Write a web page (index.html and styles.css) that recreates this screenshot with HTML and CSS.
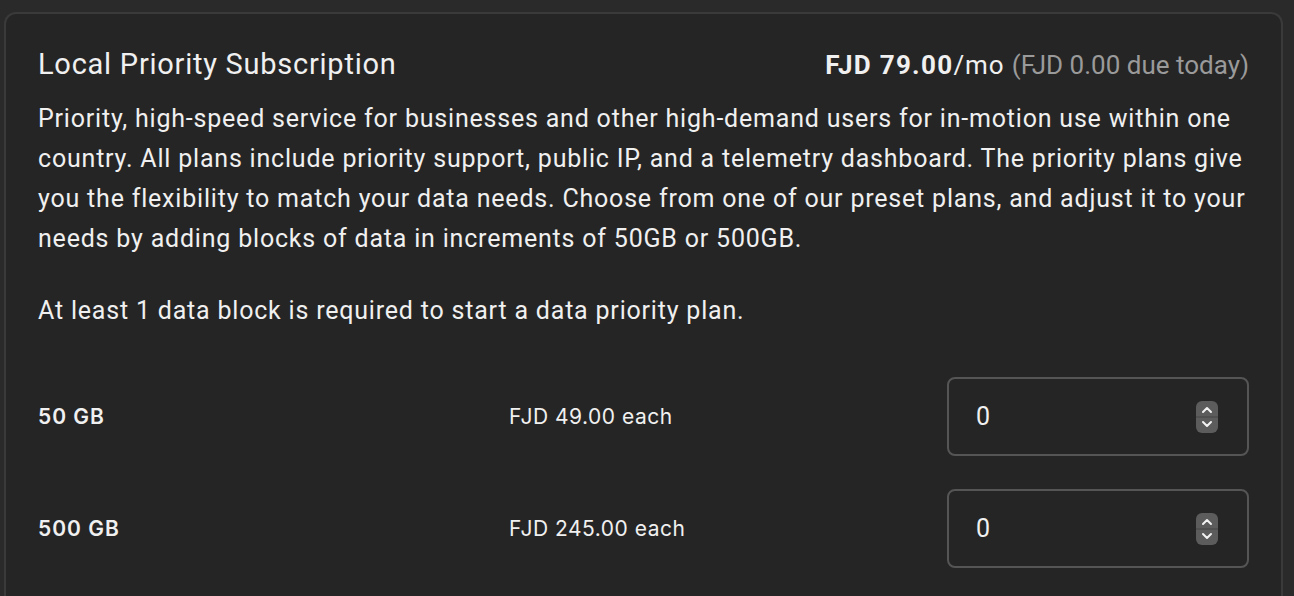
FILE: index.html
```html
<!DOCTYPE html>
<html lang="en">
<head>
<meta charset="utf-8">
<title>Local Priority Subscription</title>
<link rel="stylesheet" href="styles.css">
</head>
<body>
<section class="card">
  <header class="card-head">
    <h2 class="title">Local Priority Subscription</h2>
    <div class="price"><strong>FJD 79.00</strong>/mo <span class="due">(FJD 0.00 due today)</span></div>
  </header>
  <p class="desc">Priority, high-speed service for businesses and other high-demand users for in-motion use within one country. All plans include priority support, public IP, and a telemetry dashboard. The priority plans give you the flexibility to match your data needs. Choose from one of our preset plans, and adjust it to your needs by adding blocks of data in increments of 50GB or 500GB.</p>
  <p class="desc note">At least 1 data block is required to start a data priority plan.</p>
  <div class="blocks">
    <div class="block">
      <span class="block-name">50 GB</span>
      <span class="block-price">FJD 49.00 each</span>
      <div class="qty">
        <span class="qty-value">0</span>
        <svg class="spin" width="22" height="32" viewBox="0 0 22 32" aria-hidden="true">
          <rect x="0" y="0" width="22" height="32" rx="6" fill="#5c5c5c"/>
          <line x1="0" y1="16" x2="22" y2="16" stroke="#444" stroke-width="1"/>
          <path d="M7 11 L11 7 L15 11" fill="none" stroke="#f2f2f2" stroke-width="2" stroke-linecap="round" stroke-linejoin="round"/>
          <path d="M7 21 L11 25 L15 21" fill="none" stroke="#f2f2f2" stroke-width="2" stroke-linecap="round" stroke-linejoin="round"/>
        </svg>
      </div>
    </div>
    <div class="block">
      <span class="block-name">500 GB</span>
      <span class="block-price">FJD 245.00 each</span>
      <div class="qty">
        <span class="qty-value">0</span>
        <svg class="spin" width="22" height="32" viewBox="0 0 22 32" aria-hidden="true">
          <rect x="0" y="0" width="22" height="32" rx="6" fill="#5c5c5c"/>
          <line x1="0" y1="16" x2="22" y2="16" stroke="#444" stroke-width="1"/>
          <path d="M7 11 L11 7 L15 11" fill="none" stroke="#f2f2f2" stroke-width="2" stroke-linecap="round" stroke-linejoin="round"/>
          <path d="M7 21 L11 25 L15 21" fill="none" stroke="#f2f2f2" stroke-width="2" stroke-linecap="round" stroke-linejoin="round"/>
        </svg>
      </div>
    </div>
  </div>
</section>
</body>
</html>
```
FILE: styles.css
```css
html, body {
  margin: 0;
  padding: 0;
  background: #2a2a2a;
  height: 100%;
  overflow: hidden;
}

body {
  padding: 12px 11px 0 4px;
  font-family: Roboto, "Liberation Sans", sans-serif;
  color: #f0f0f0;
}

.card {
  background: #252525;
  border: 2px solid #3a3a3a;
  border-bottom: none;
  border-radius: 12px 12px 0 0;
  padding: 30px 32px 40px 32px;
  min-height: 700px;
}

.card-head {
  display: flex;
  justify-content: space-between;
  align-items: baseline;
  margin-bottom: 14px;
}

.title {
  margin: 0;
  font-size: 29px;
  font-weight: 400;
  line-height: 40px;
  letter-spacing: 0.75px;
}

.price {
  font-size: 26px;
  line-height: 40px;
  letter-spacing: 0.9px;
}

.price strong {
  font-weight: 700;
  letter-spacing: 1.3px;
}

.due {
  color: #9a9a9a;
  letter-spacing: 0;
}

.desc {
  margin: 0;
  font-size: 25px;
  line-height: 40px;
  letter-spacing: 0.8px;
}

.note {
  margin-top: 32px;
}

.blocks {
  margin-top: 46px;
  display: flex;
  flex-direction: column;
  gap: 33px;
}

.block {
  display: grid;
  grid-template-columns: 471px 1fr 302px;
  align-items: center;
  font-family: Inter, "Liberation Sans", sans-serif;
  font-size: 21px;
  letter-spacing: 0.5px;
}

.block-name {
  font-weight: 600;
  letter-spacing: 1px;
}

.qty {
  height: 79px;
  box-sizing: border-box;
  border: 2px solid #555;
  border-radius: 8px;
  display: flex;
  align-items: center;
  justify-content: space-between;
  padding: 0 29px 0 27px;
}

.qty-value {
  font-family: Roboto, "Liberation Sans", sans-serif;
  font-size: 25px;
}

.spin {
  display: block;
}
```
